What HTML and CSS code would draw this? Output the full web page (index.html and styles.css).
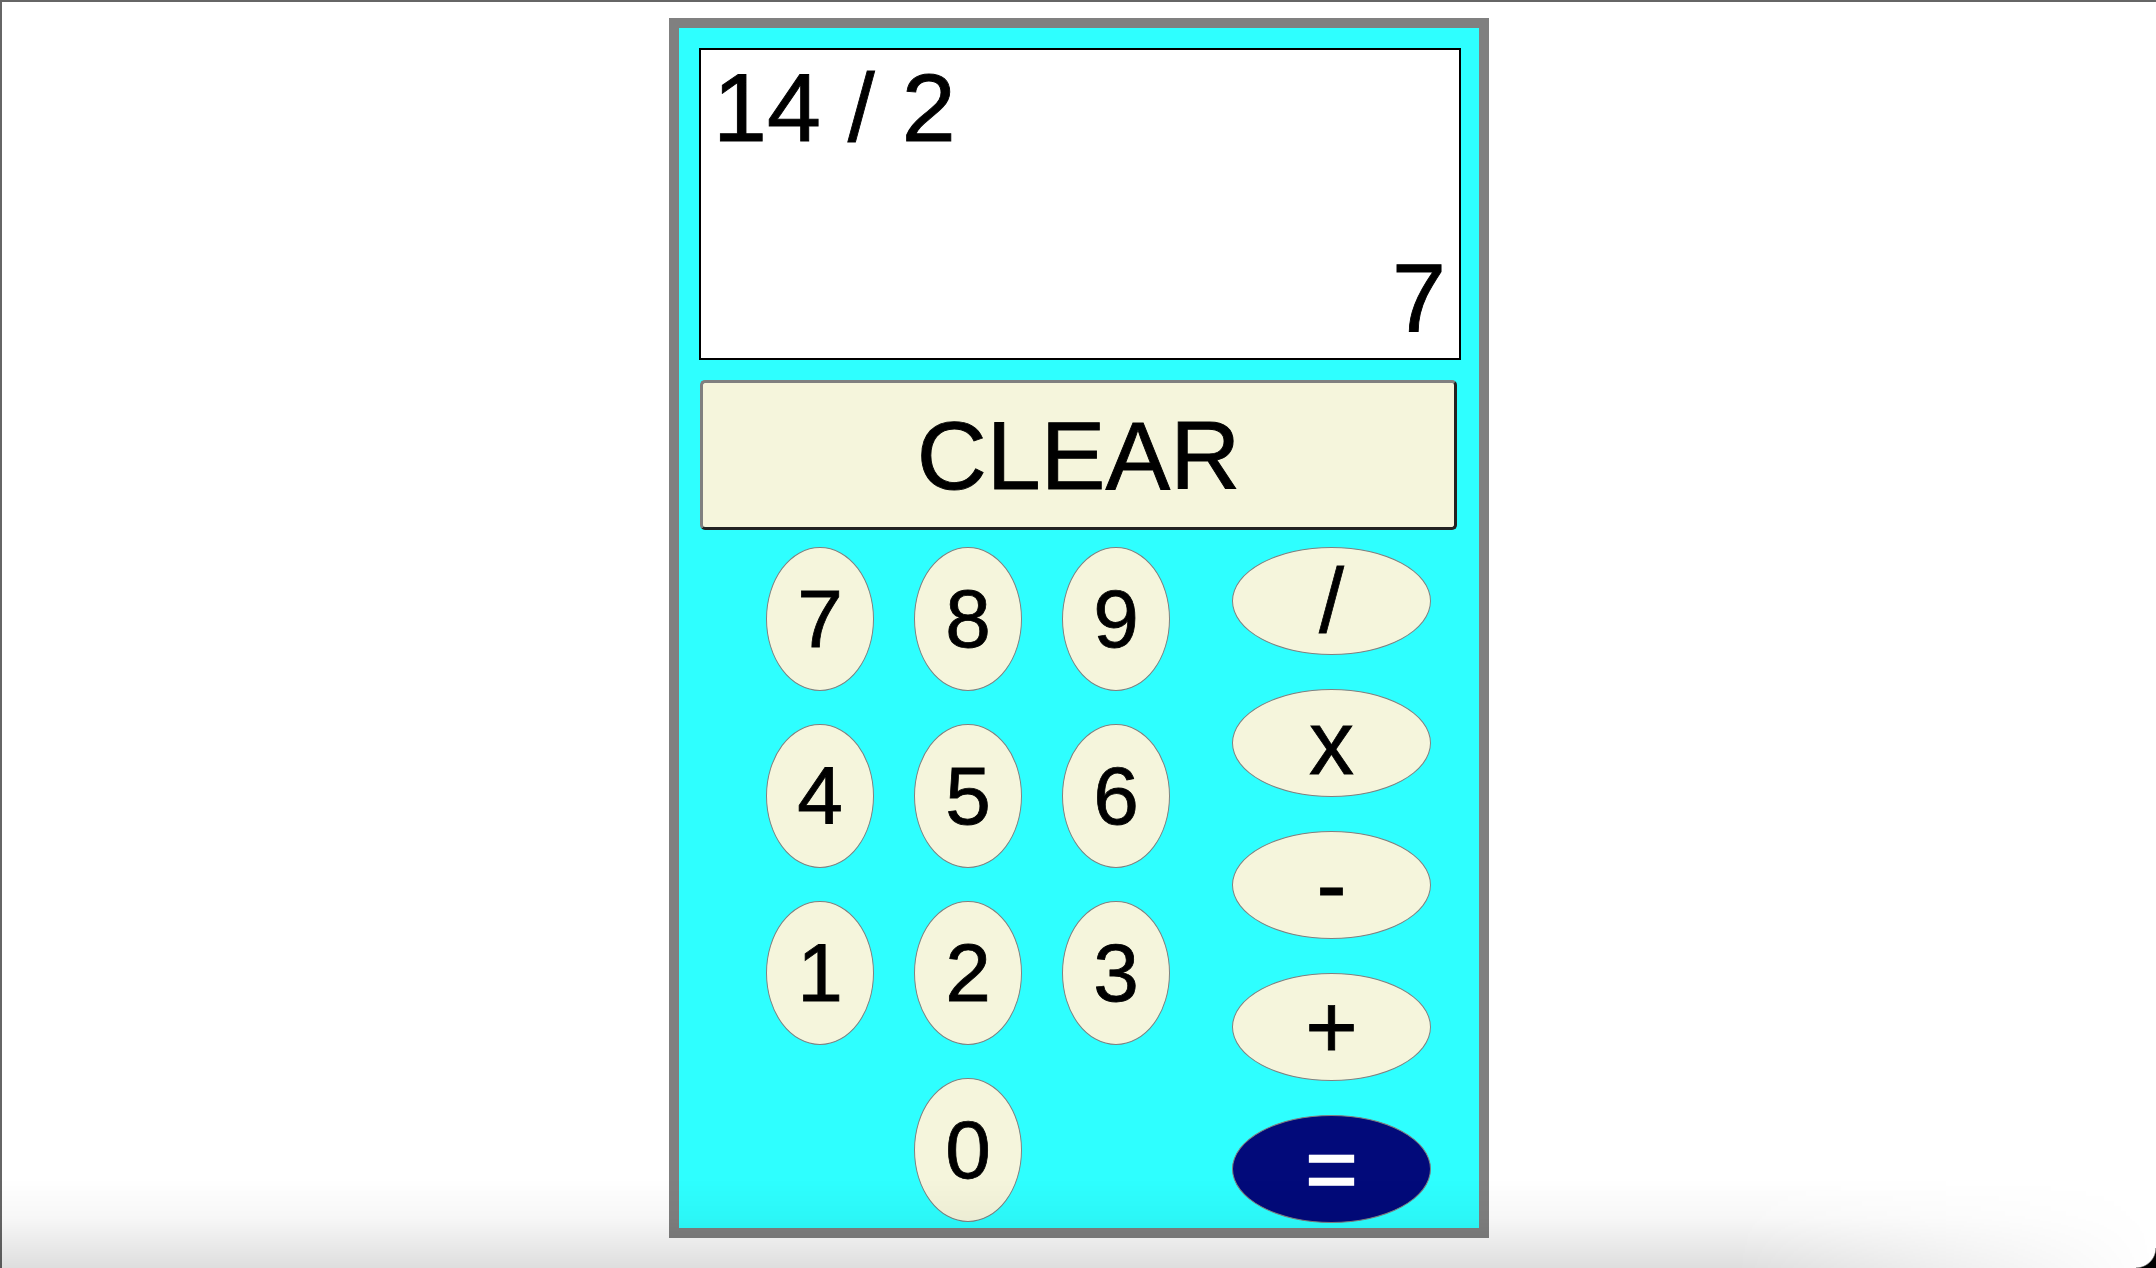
FILE: index.html
```html
<!DOCTYPE html>
<html lang="en">
<head>
<meta charset="utf-8">
<title>Calculator</title>
<link rel="stylesheet" href="styles.css">
</head>
<body>
<div class="calc">
  <div class="display">
    <div class="expr">14 / 2</div>
    <div class="result">7</div>
  </div>
  <button class="clear">CLEAR</button>
  <div class="keypad">
    <div class="digits">
      <button class="key">7</button>
      <button class="key">8</button>
      <button class="key">9</button>
      <button class="key">4</button>
      <button class="key">5</button>
      <button class="key">6</button>
      <button class="key">1</button>
      <button class="key">2</button>
      <button class="key">3</button>
      <button class="key zero">0</button>
    </div>
    <div class="ops">
      <button class="op">/</button>
      <button class="op">x</button>
      <button class="op">-</button>
      <button class="op">+</button>
      <button class="op equals">=</button>
    </div>
  </div>
</div>
<div class="shade"></div>
<div class="corner"></div>
</body>
</html>
```
FILE: styles.css
```css
html, body {
  height: 100%;
}
body {
  margin: 0;
  box-sizing: border-box;
  border-top: 2px solid #666666;
  border-left: 2px solid #666666;
  background: #ffffff;
  font-family: "Liberation Sans", Arial, sans-serif;
  overflow: hidden;
}
.calc {
  width: 762px;
  height: 1180px;
  margin: 16px auto 0;
  padding: 20px 18px 0 20px;
  background: #2effff;
  border: 10px solid #808080;
  box-sizing: content-box;
}
.display {
  box-sizing: border-box;
  width: 762px;
  height: 312px;
  background: #ffffff;
  border: 2px solid #000000;
  padding: 2px 13px 4px 12px;
  display: flex;
  flex-direction: column;
  justify-content: space-between;
  font-size: 97px;
  line-height: 1.15;
  color: #000;
  -webkit-text-stroke: 0.9px #000;
}
.result {
  text-align: right;
}
.clear {
  display: block;
  box-sizing: border-box;
  width: 757px;
  height: 150px;
  margin: 20px 0 0 1px;
  padding: 0;
  background: #f5f5dc;
  border: 3px solid;
  border-color: #808080 #222222 #222222 #808080;
  border-radius: 5px;
  font-family: "Liberation Sans", Arial, sans-serif;
  font-size: 97px;
  line-height: 1;
  color: #000;
  -webkit-text-stroke: 0.9px #000;
}
.keypad {
  display: flex;
  margin-top: 17px;
  padding-left: 67px;
}
.digits {
  display: grid;
  grid-template-columns: repeat(3, 108px);
  grid-auto-rows: 144px;
  column-gap: 40px;
  row-gap: 33px;
}
.key, .op {
  box-sizing: border-box;
  margin: 0;
  padding: 0;
  background: #f5f5dc;
  border: 1px solid #808080;
  border-radius: 50%;
  font-family: "Liberation Sans", Arial, sans-serif;
  color: #000;
  line-height: 1;
  display: flex;
  align-items: center;
  justify-content: center;
  -webkit-text-stroke: 0.8px #000;
}
.key {
  width: 108px;
  height: 144px;
  font-size: 82px;
}
.zero {
  grid-column: 2;
}
.ops {
  display: flex;
  flex-direction: column;
  gap: 34px;
  margin-left: 62px;
}
.op {
  width: 199px;
  height: 108px;
  font-size: 90px;
}
.equals {
  background: #020a7a;
  color: #ffffff;
  -webkit-text-stroke: 1.5px #ffffff;
}
.shade {
  position: fixed;
  left: 0;
  right: 0;
  bottom: 0;
  height: 90px;
  pointer-events: none;
  background: linear-gradient(to bottom, rgba(0,0,0,0) 0%, rgba(0,0,0,0.03) 45%, rgba(0,0,0,0.13) 100%);
  -webkit-mask-image: linear-gradient(to left, transparent 0, #000 420px);
  mask-image: linear-gradient(to left, transparent 0, #000 420px);
}
.corner {
  position: fixed;
  right: 0;
  bottom: 0;
  width: 20px;
  height: 20px;
  pointer-events: none;
  background: radial-gradient(circle at 0 0, transparent 19px, #000000 20.5px);
}
```
